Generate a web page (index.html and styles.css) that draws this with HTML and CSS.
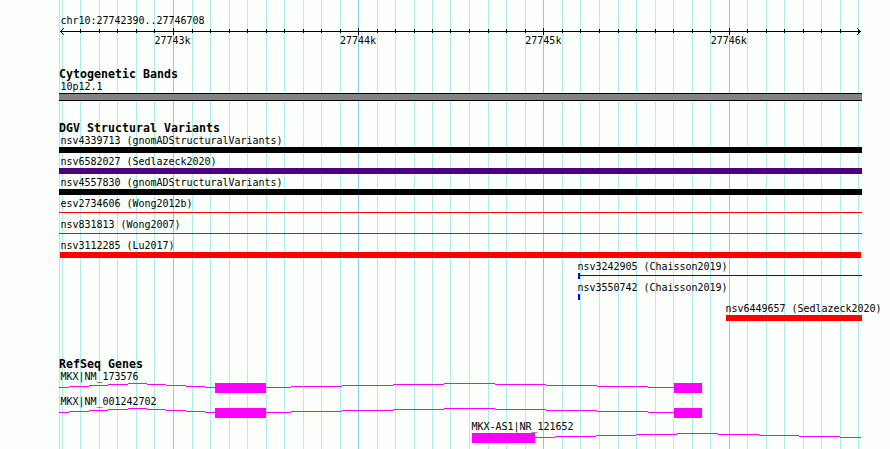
FILE: index.html
```
<!DOCTYPE html>
<html lang="en">
<head>
<meta charset="utf-8">
<title>chr10:27742390..27746708</title>
<link rel="stylesheet" href="styles.css">
</head>
<body>
<main class="browser">
  <svg class="grid" width="890" height="449" shape-rendering="crispEdges" aria-hidden="true">
    <path class="minor" d="M59.5 0V449M62.5 0V449M80.5 0V449M99.5 0V449M117.5 0V449M136.5 0V449M154.5 0V449M192.5 0V449M210.5 0V449M229.5 0V449M247.5 0V449M266.5 0V449M284.5 0V449M303.5 0V449M321.5 0V449M340.5 0V449M377.5 0V449M395.5 0V449M414.5 0V449M432.5 0V449M450.5 0V449M469.5 0V449M488.5 0V449M506.5 0V449M525.5 0V449M562.5 0V449M580.5 0V449M599.5 0V449M618.5 0V449M636.5 0V449M655.5 0V449M673.5 0V449M692.5 0V449M710.5 0V449M747.5 0V449M766.5 0V449M784.5 0V449M803.5 0V449M821.5 0V449M840.5 0V449M858.5 0V449"/>
    <path class="major" d="M173.5 0V449M358.5 0V449M543.5 0V449M729.5 0V449"/>
  </svg>

  <header class="ruler">
    <div class="label">chr10:27742390..27746708</div>
    <svg class="axis" width="890" height="8" shape-rendering="crispEdges" aria-hidden="true">
      <path d="M60 4.5H861M80.5 2V6M99.5 2V6M117.5 2V6M136.5 2V6M154.5 2V6M192.5 2V6M210.5 2V6M229.5 2V6M247.5 2V6M266.5 2V6M284.5 2V6M303.5 2V6M321.5 2V6M340.5 2V6M377.5 2V6M395.5 2V6M414.5 2V6M432.5 2V6M450.5 2V6M469.5 2V6M488.5 2V6M506.5 2V6M525.5 2V6M562.5 2V6M580.5 2V6M599.5 2V6M618.5 2V6M636.5 2V6M655.5 2V6M673.5 2V6M692.5 2V6M710.5 2V6M747.5 2V6M766.5 2V6M784.5 2V6M803.5 2V6M821.5 2V6M840.5 2V6M858.5 2V6M173.5 1V8M358.5 1V8M543.5 1V8M729.5 1V8"/>
      <path d="M64 1.5H63M63 2.5H62M62 3.5H61M62 5.5H61M63 6.5H62M64 7.5H63M857 1.5H858M858 2.5H859M859 3.5H860M859 5.5H860M858 6.5H859M857 7.5H858"/>
    </svg>
    <div class="ticks"><span>27743k</span><span>27744k</span><span>27745k</span><span>27746k</span></div>
  </header>

  <section class="track cyto">
    <h2>Cytogenetic Bands</h2>
    <div class="label">10p12.1</div>
    <div class="band"></div>
  </section>

  <section class="track variants">
    <h2>DGV Structural Variants</h2>
    <div class="row"><div class="label">nsv4339713 (gnomADStructuralVariants)</div><div class="bar black"></div></div>
    <div class="row"><div class="label">nsv6582027 (Sedlazeck2020)</div><div class="bar purple"></div></div>
    <div class="row"><div class="label">nsv4557830 (gnomADStructuralVariants)</div><div class="bar black"></div></div>
    <div class="row"><div class="label">esv2734606 (Wong2012b)</div><div class="bar thin"></div></div>
    <div class="row"><div class="label">nsv831813 (Wong2007)</div><div class="bar thin"></div></div>
    <div class="row"><div class="label">nsv3112285 (Lu2017)</div><div class="bar red inset"></div></div>
    <div class="row chaisson"><div class="label">nsv3242905 (Chaisson2019)</div><div class="marker span"></div></div>
    <div class="row chaisson"><div class="label">nsv3550742 (Chaisson2019)</div><div class="marker"></div></div>
    <div class="row sedlazeck"><div class="label">nsv6449657 (Sedlazeck2020)</div><div class="bar red"></div></div>
  </section>

  <section class="track genes">
    <h2>RefSeq Genes</h2>
    <div class="gene"><div class="label">MKX|NM_173576</div>
      <svg width="890" height="11" shape-rendering="crispEdges" aria-hidden="true"><path d="M59 4.5H69M69 3.5H89M89 2.5H108M108 1.5H128M128 .5H147M147 1.5H166M166 2.5H186M186 3.5H205M205 4.5H215M266 4.5H291M291 3.5H342M342 2.5H393M393 1.5H444M444 .5H495M495 1.5H546M546 2.5H597M597 3.5H648M648 4.5H674"/><path class="exon" d="M215 0H266V10H215ZM674 0H702V10H674Z"/></svg>
    </div>
    <div class="gene"><div class="label">MKX|NM_001242702</div>
      <svg width="890" height="11" shape-rendering="crispEdges" aria-hidden="true"><path d="M59 4.5H69M69 3.5H89M89 2.5H108M108 1.5H128M128 .5H147M147 1.5H166M166 2.5H186M186 3.5H205M205 4.5H215M266 4.5H291M291 3.5H342M342 2.5H393M393 1.5H444M444 .5H495M495 1.5H546M546 2.5H597M597 3.5H648M648 4.5H674"/><path class="exon" d="M215 0H266V10H215ZM674 0H702V10H674Z"/></svg>
    </div>
    <div class="gene antisense"><div class="label">MKX-AS1|NR_121652</div>
      <svg width="890" height="11" shape-rendering="crispEdges" aria-hidden="true"><path d="M535 4.5H555M555 3.5H596M596 2.5H636M636 1.5H677M677 .5H718M718 1.5H759M759 2.5H799M799 3.5H840M840 4.5H861"/><path class="exon" d="M472 0H535V10H472Z"/></svg>
    </div>
  </section>
</main>
</body>
</html>
```
FILE: styles.css
```
* { box-sizing: border-box; }
body {
  margin: 0;
  background: #fcfffc;
  color: #000;
  font: 10px/12px "DejaVu Sans Mono", monospace;
}
.browser {
  position: relative;
  width: 890px;
  height: 449px;
  overflow: hidden;
}
svg { display: block; fill: none; }
.grid { position: absolute; inset: 0; z-index: -1; }
.minor { stroke: #afeeee; }
.major { stroke: #87ceeb; }
.label {
  height: 12px;
  padding-left: 60.5px;
  letter-spacing: -0.02px;
  white-space: pre;
}
h2 {
  margin: 0;
  height: 13px;
  padding-left: 59px;
  font-size: 11.6px;
  line-height: 13px;
  letter-spacing: 0.02px;
}
.ruler { height: 68px; padding-top: 15px; }
.axis { stroke: #000; }
.ticks {
  display: grid;
  grid-template-columns: repeat(4, 185.4px);
  padding-left: 154.5px;
}
.cyto { height: 54px; }
.band {
  width: 803px;
  height: 8px;
  margin-left: 59px;
  background: #848284;
  border: solid #000;
  border-width: 1px 0;
}
.variants { height: 236px; }
.row { height: 21px; }
.bar { width: 803px; height: 6px; margin-left: 59px; }
.black { background: #000; }
.purple { background: #4b0082; }
.red { background: #f00; }
.inset { width: 801px; margin-left: 60px; }
.thin { height: 1px; margin-top: 2px; background: #f00; }
.chaisson .label { padding-left: 577.5px; }
.marker { width: 284px; height: 6px; margin-left: 578px; border-left: 2px solid #00f; }
.span { background: linear-gradient(#00f, #00f) 0 2px / 100% 1px no-repeat; }
.sedlazeck .label { padding-left: 725.5px; }
.sedlazeck .bar { width: 136px; margin-left: 726px; }
.gene { height: 25px; }
.gene svg { stroke: #f0f; }
.gene .exon { fill: #f0f; stroke: none; }
.antisense .label { padding-left: 471.5px; }
```
